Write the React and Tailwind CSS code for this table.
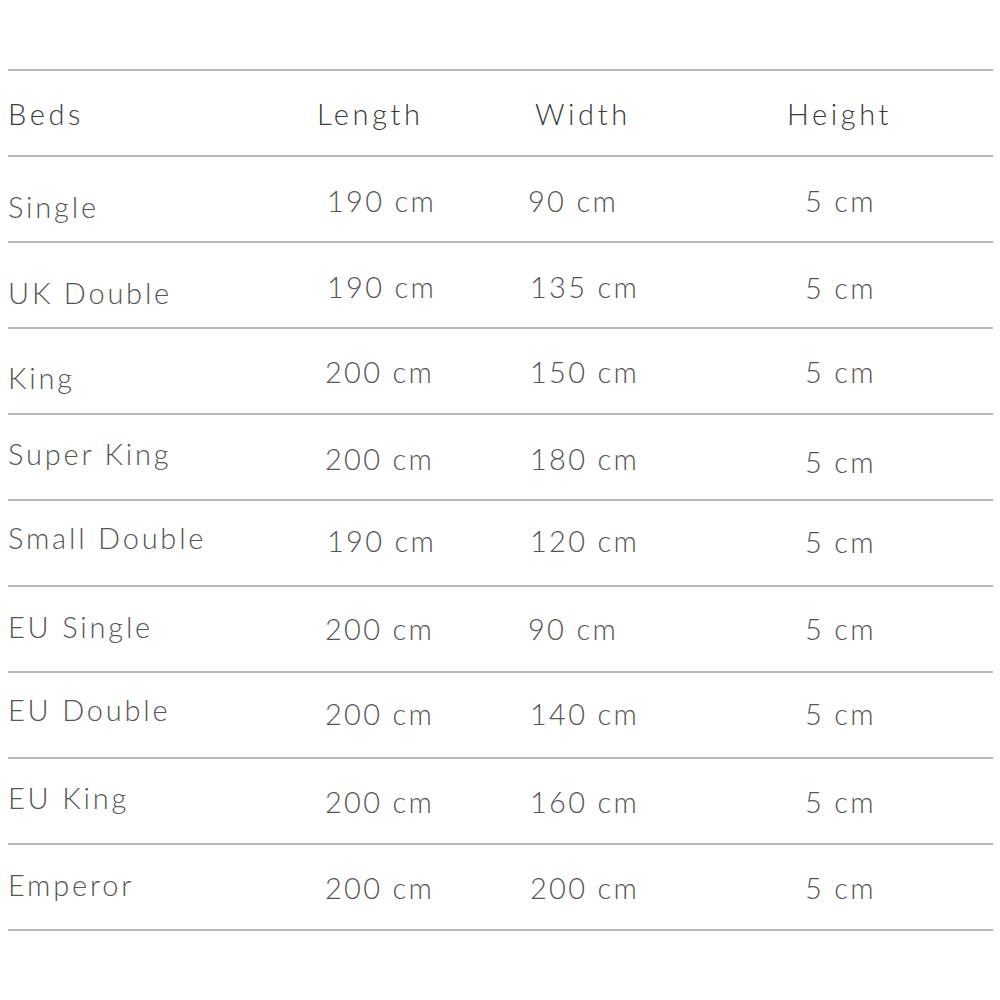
const rows = [
  { name: "Single", nd: 7, l: "190 cm", ld: 1, lx: 10, w: "90 cm", wd: 1, wx: 0, h: "5 cm", hd: 1 },
  { name: "UK Double", nd: 7, l: "190 cm", ld: 1, lx: 10, w: "135 cm", wd: 1, wx: 2, h: "5 cm", hd: 2 },
  { name: "King", nd: 6, l: "200 cm", ld: 0, lx: 8, w: "150 cm", wd: 0, wx: 2, h: "5 cm", hd: 0 },
  { name: "Super King", nd: -4, l: "200 cm", ld: 1, lx: 8, w: "180 cm", wd: 1, wx: 2, h: "5 cm", hd: 4 },
  { name: "Small Double", nd: -6, l: "190 cm", ld: -3, lx: 10, w: "120 cm", wd: -3, wx: 2, h: "5 cm", hd: -2 },
  { name: "EU Single", nd: -3, l: "200 cm", ld: -1, lx: 8, w: "90 cm", wd: -1, wx: 0, h: "5 cm", hd: -1 },
  { name: "EU Double", nd: -6, l: "200 cm", ld: -2, lx: 8, w: "140 cm", wd: -2, wx: 2, h: "5 cm", hd: -2 },
  { name: "EU King", nd: -4, l: "200 cm", ld: 0, lx: 8, w: "160 cm", wd: 0, wx: 2, h: "5 cm", hd: 0 },
  { name: "Emperor", nd: -3, l: "200 cm", ld: 0, lx: 8, w: "200 cm", wd: 0, wx: 2, h: "5 cm", hd: 0 },
];

function Cell({ children, dx = 0, dy = 0, className = "" }) {
  return (
    <div className={className}>
      <span className="relative inline-block" style={{ left: dx, top: dy }}>
        {children}
      </span>
    </div>
  );
}

export default function App() {
  return (
    <div
      className="w-[1000px] h-[1000px] bg-white pt-[69px] px-[8px] text-[29px] font-light tracking-[2.8px] text-[#555]"
      style={{ fontFamily: "Lato, 'Open Sans', sans-serif" }}
    >
      <div className="w-[985px] border-b-2 border-[#b8b8b8]">
        <div className="grid grid-cols-[309px_211px_259px_1fr] items-center h-[86px] border-t-2 border-[#b8b8b8] text-[#3a3a3a] tracking-[3.6px] leading-none">
          <Cell>Beds</Cell>
          <Cell>Length</Cell>
          <Cell dx={7}>Width</Cell>
          <Cell>Height</Cell>
        </div>
        {rows.map((r) => (
          <div
            key={r.name}
            className="grid grid-cols-[309px_211px_259px_1fr] items-center h-[86px] border-t-2 border-[#b8b8b8] leading-none"
          >
            <Cell dy={r.nd}>{r.name}</Cell>
            <Cell className="tracking-[2.3px]" dx={r.lx} dy={r.ld}>{r.l}</Cell>
            <Cell className="tracking-[2.3px]" dx={r.wx} dy={r.wd}>{r.w}</Cell>
            <Cell className="tracking-[2.3px]" dx={18} dy={r.hd}>{r.h}</Cell>
          </div>
        ))}
      </div>
    </div>
  );
}
